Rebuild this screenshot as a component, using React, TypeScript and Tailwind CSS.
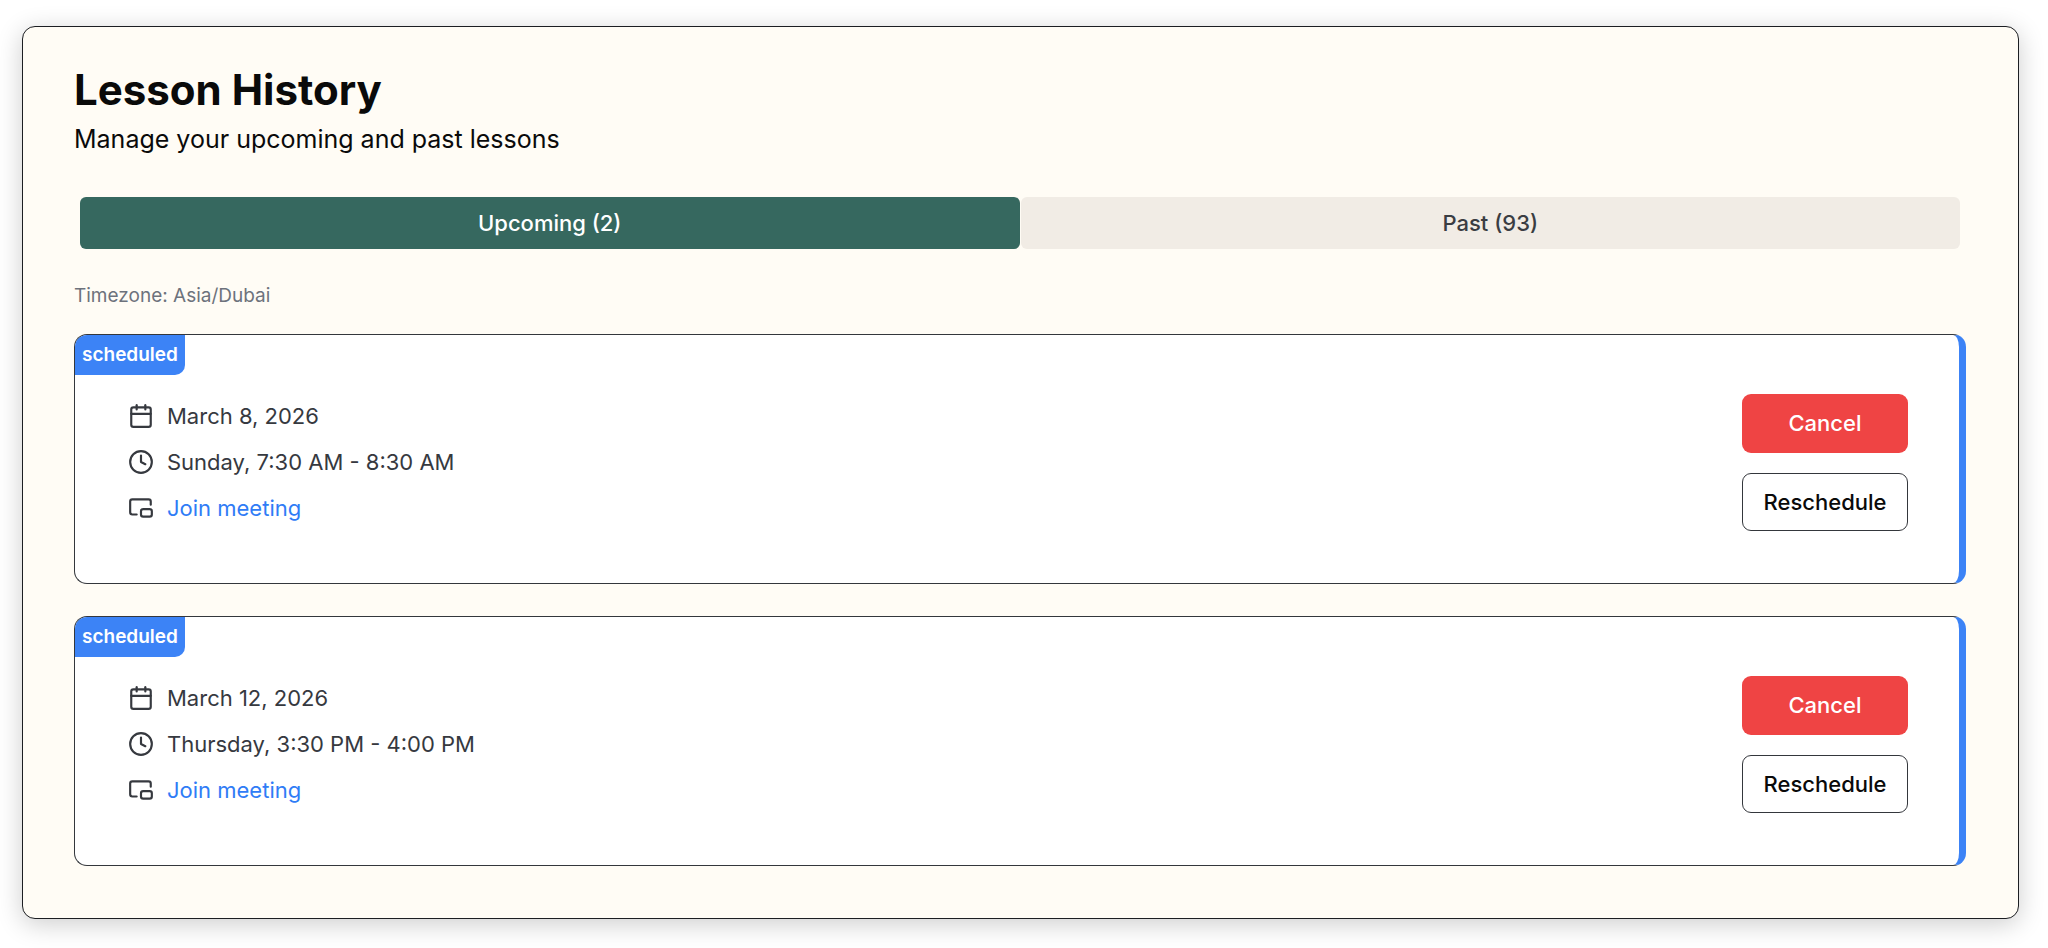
import { useState } from "react";
import { Calendar, Clock, PictureInPicture2 } from "lucide-react";

interface Lesson {
  id: number;
  status: string;
  date: string;
  time: string;
}

const upcoming: Lesson[] = [
  { id: 1, status: "scheduled", date: "March 8, 2026", time: "Sunday, 7:30 AM - 8:30 AM" },
  { id: 2, status: "scheduled", date: "March 12, 2026", time: "Thursday, 3:30 PM - 4:00 PM" },
];

function LessonCard({ lesson }: { lesson: Lesson }) {
  return (
    <li className="flex h-[250px] items-start justify-between overflow-hidden rounded-[13px] border border-r-[7px] border-[#34373c] border-r-[#3c83f6] bg-white">
      <div>
        <span className="inline-flex h-10 items-center rounded-br-[10px] bg-[#3c83f6] px-[7px] align-top text-[19px] font-semibold text-white">
          {lesson.status}
        </span>
        <dl className="mt-[18px] ml-[53px] text-[22px] leading-[46px] text-[#36393f]">
          <div className="flex items-center gap-[13px]">
            <dt aria-label="Date">
              <Calendar size={26} strokeWidth={2} />
            </dt>
            <dd>{lesson.date}</dd>
          </div>
          <div className="flex items-center gap-[13px]">
            <dt aria-label="Time">
              <Clock size={26} strokeWidth={2} />
            </dt>
            <dd>{lesson.time}</dd>
          </div>
          <div className="flex items-center gap-[13px]">
            <dt aria-label="Meeting">
              <PictureInPicture2 size={26} strokeWidth={2} />
            </dt>
            <dd>
              <a href="#meeting" className="text-[#2f7cf6]">
                Join meeting
              </a>
            </dd>
          </div>
        </dl>
      </div>
      <div className="mt-[59px] mr-[51px] flex w-[166px] flex-col gap-5 text-[22px] font-medium">
        <button type="button" className="h-[59px] rounded-[9px] bg-[#ef4444] text-white">
          Cancel
        </button>
        <button type="button" className="h-[58px] rounded-[9px] border border-[#34373c] bg-white text-[#0a0a0a]">
          Reschedule
        </button>
      </div>
    </li>
  );
}

export default function App() {
  const [tab, setTab] = useState<"upcoming" | "past">("upcoming");
  const tabClass = (active: boolean) =>
    active
      ? "h-[52px] flex-1 rounded-md bg-[#36685f] text-white"
      : "h-[52px] flex-1 rounded-md bg-[#f1ece5] text-[#3a3d42]";

  return (
    <main className="bg-white pt-[26px] pr-[29px] pb-[29px] pl-[22px] font-['Inter','Liberation_Sans',sans-serif]">
      <section className="rounded-[13px] border border-[#1c1e22] bg-[#fffcf5] pt-10 pr-[52px] pb-[52px] pl-[51px] shadow-[0_5px_26px_rgba(0,0,0,0.2)]">
        <h1 className="text-[42px] leading-[46px] font-bold text-[#0a0a0a]">Lesson History</h1>
        <p className="mt-2 text-[25px] leading-9 text-[#0a0a0a]">Manage your upcoming and past lessons</p>
        <div role="tablist" className="mt-10 flex gap-px px-[6px] text-[22px] font-medium">
          <button type="button" role="tab" aria-selected={tab === "upcoming"} onClick={() => setTab("upcoming")} className={tabClass(tab === "upcoming")}>
            Upcoming (2)
          </button>
          <button type="button" role="tab" aria-selected={tab === "past"} onClick={() => setTab("past")} className={tabClass(tab === "past")}>
            Past (93)
          </button>
        </div>
        <p className="mt-[33px] text-[19px] leading-7 text-[#6d727c]">Timezone: Asia/Dubai</p>
        <ul className="mt-6 flex flex-col gap-8">
          {upcoming.map((lesson) => (
            <LessonCard key={lesson.id} lesson={lesson} />
          ))}
        </ul>
      </section>
    </main>
  );
}
